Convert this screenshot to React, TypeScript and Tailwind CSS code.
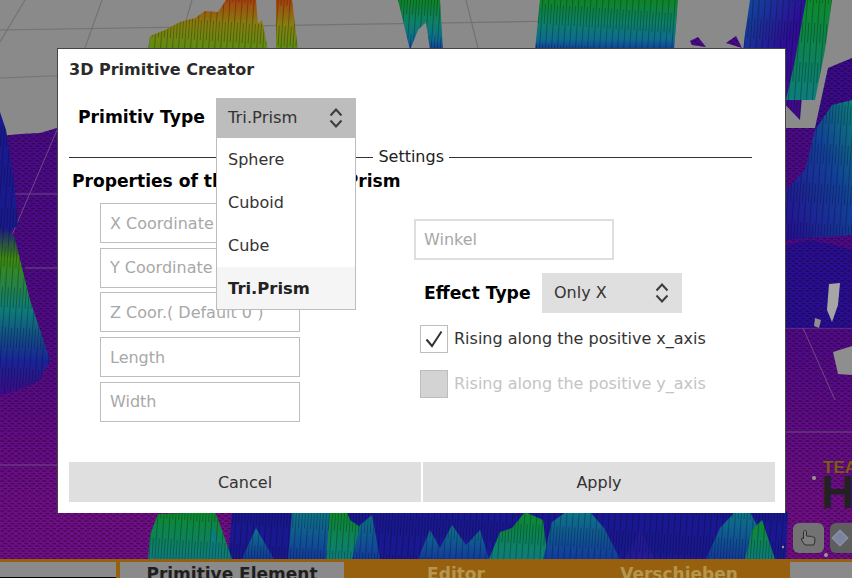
import React from "react";

const font = "font-['DejaVu_Sans',sans-serif]";

function Chevrons() {
  return (
    <svg width="14" height="24" viewBox="0 0 14 24" fill="none" stroke="#3c3c3c" strokeWidth="2">
      <path d="M1.5 9.5 7 3.5l5.5 6" />
      <path d="M1.5 14.5 7 20.5l5.5-6" />
    </svg>
  );
}

// one surface of the height map: gradient fill plus the mesh texture on top
function Surface({ points, fill, streak }: { points: string; fill: string; streak?: boolean }) {
  return (
    <>
      <polygon points={points} fill={fill} />
      <polygon points={points} fill={streak ? "url(#streak)" : "url(#mesh)"} />
    </>
  );
}

function Terrain() {
  return (
    <svg className="absolute inset-0" width="852" height="578" viewBox="0 0 852 578">
      <defs>
        <pattern id="mesh" width="7" height="5" patternUnits="userSpaceOnUse">
          <path d="M0 1h5M3 3.5h4M2 0v2M6 3v2" stroke="#000" strokeOpacity="0.42" strokeWidth="0.7" fill="none" />
        </pattern>
        <pattern id="streak" width="6" height="40" patternUnits="userSpaceOnUse" patternTransform="rotate(4)">
          <path d="M1.5 0v40M4.5 6v20" stroke="#000" strokeOpacity="0.35" strokeWidth="0.8" fill="none" />
        </pattern>
        <linearGradient id="ground" gradientUnits="userSpaceOnUse" x1="0" y1="130" x2="0" y2="500">
          <stop offset="0" stopColor="#4a0a86" />
          <stop offset="0.6" stopColor="#520a86" />
          <stop offset="1" stopColor="#6e0e84" />
        </linearGradient>
        <linearGradient id="warm" x1="0" y1="0" x2="0" y2="1">
          <stop offset="0" stopColor="#a8420f" />
          <stop offset="0.5" stopColor="#84800f" />
          <stop offset="1" stopColor="#5c8c14" />
        </linearGradient>
        <linearGradient id="cool" x1="0" y1="0" x2="0" y2="1">
          <stop offset="0" stopColor="#0f8427" />
          <stop offset="0.45" stopColor="#0d8068" />
          <stop offset="0.8" stopColor="#0e6a90" />
          <stop offset="1" stopColor="#123c98" />
        </linearGradient>
        <linearGradient id="side" x1="0" y1="0" x2="1" y2="1">
          <stop offset="0" stopColor="#0e4c9a" />
          <stop offset="0.5" stopColor="#2c0e96" />
          <stop offset="1" stopColor="#4a0a85" />
        </linearGradient>
        <linearGradient id="peakRight" x1="1" y1="0" x2="0" y2="1">
          <stop offset="0" stopColor="#0d7c78" />
          <stop offset="0.4" stopColor="#123f98" />
          <stop offset="1" stopColor="#260e92" />
        </linearGradient>
        <linearGradient id="hill" x1="0" y1="0" x2="0" y2="1">
          <stop offset="0" stopColor="#160e8c" />
          <stop offset="0.2" stopColor="#3c8a10" />
          <stop offset="0.5" stopColor="#0d7c78" />
          <stop offset="0.8" stopColor="#182496" />
          <stop offset="1" stopColor="#3c0a88" />
        </linearGradient>
        <linearGradient id="spike" x1="0" y1="0" x2="0" y2="1">
          <stop offset="0" stopColor="#0d7488" />
          <stop offset="1" stopColor="#133a9c" />
        </linearGradient>
        <linearGradient id="spikeGreen" x1="0" y1="0" x2="0" y2="1">
          <stop offset="0" stopColor="#0d8a2c" />
          <stop offset="1" stopColor="#0d7c7c" />
        </linearGradient>
      </defs>

      <rect width="852" height="578" fill="#8a8a8a" />
      <g stroke="#737373" strokeWidth="1.2">
        <path d="M0 30 560 21" />
        <path d="M0 78 150 72" />
        <path d="M25 0 0 42M102 0 85 48M192 0 178 48M466 0 478 48" />
      </g>

      {/* purple ground */}
      <Surface points="0,136 20,134 40,133 57,128 852,128 852,578 0,578" fill="url(#ground)" />
      <g stroke="#6d4a86" strokeWidth="1">
        <path d="M57 130 12 235M15 194H57M25 268H57M0 465H57" />
        <path d="M786 328H852M786 432H852M795 310l40 90" />
      </g>

      {/* peaks above the dialog */}
      <Surface streak points="148,50 150,36 165,30 180,22 195,18 205,11 218,12 226,0 256,0 258,24 262,20 268,50" fill="url(#warm)" />
      <Surface streak points="276,0 292,0 298,50 276,50" fill="url(#warm)" />
      <Surface streak points="398,0 440,0 443,50 430,50 426,22 418,30 410,50 404,25" fill="url(#cool)" />
      <Surface streak points="540,0 678,0 674,50 535,50" fill="url(#cool)" />
      <Surface streak points="750,0 810,0 800,120 742,60 745,34" fill="url(#side)" />
      <Surface streak points="806,0 832,0 825,50 815,100 786,100 795,60" fill="url(#spikeGreen)" />
      <Surface points="690,41 698,37 706,47 692,45" fill="#480a86" />
      <Surface points="726,43 736,36 742,48" fill="#480a86" />
      <Surface points="828,68 852,58 852,128 815,128" fill="#3a0a88" />

      {/* left hill */}
      <Surface streak points="0,112 6,130 14,180 18,225 0,240" fill="#1a1a90" />
      <Surface streak points="0,225 14,235 30,300 50,360 40,380 20,390 0,395" fill="url(#hill)" />

      {/* right side */}
      <Surface streak points="786,190 805,170 815,130 832,105 852,100 852,235 786,240" fill="url(#peakRight)" />
      <Surface points="786,245 810,240 830,244 852,250 852,328 786,328" fill="#2a0e92" />
      <polygon points="829,284 840,283 838,305 832,322 827,310" fill="#a6a6a6" />
      <polygon points="833,352 852,346 852,375 838,374" fill="#8e8e8e" />
      <polygon points="815,318 821,320 819,328 814,326" fill="#8e8e8e" />

      {/* strip under the dialog */}
      <Surface streak points="228,559 232,512 788,512 786,559" fill="#1a1890" />
      <Surface streak points="148,559 150,535 158,514 215,512 222,530 232,559" fill="url(#spikeGreen)" />
      <Surface streak points="208,559 212,525 225,559" fill="#0d7c7c" />
      <Surface streak points="242,559 256,528 274,559" fill="url(#spike)" />
      <Surface streak points="288,559 292,512 345,512 350,559" fill="url(#spike)" />
      <Surface streak points="326,559 330,512 347,512 350,520 372,535 378,559" fill="url(#spikeGreen)" />
      <Surface streak points="352,559 360,525 372,515 380,559" fill="url(#spike)" />
      <Surface streak points="418,559 430,530 440,548 452,525 466,545 480,530 489,559" fill="url(#spike)" />
      <Surface streak points="489,559 500,532 512,528 525,512 543,520 548,559" fill="url(#spikeGreen)" />
      <Surface streak points="543,559 552,522 566,512 590,512 604,528 620,559" fill="url(#spike)" />
      <Surface streak points="625,559 640,530 655,559" fill="#221a98" />
      <Surface streak points="706,559 720,528 735,512 750,512 762,535 772,559" fill="url(#spike)" />
      <Surface streak points="745,559 752,530 762,520 775,559" fill="url(#spikeGreen)" />

      <g fill="#989898">
        <circle cx="814" cy="478" r="2" />
        <circle cx="826" cy="555" r="2" />
        <circle cx="783" cy="547" r="1.2" />
      </g>
    </svg>
  );
}

function Field({ placeholder, className = "" }: { placeholder: string; className?: string }) {
  return (
    <input
      placeholder={placeholder}
      className={`w-[200px] h-10 border bg-white text-base text-[#333] placeholder:text-[#a8a8a8] outline-none ${className}`}
    />
  );
}

function Select({ value, className = "" }: { value: string; className?: string }) {
  return (
    <div className={`w-[140px] h-10 flex items-center justify-between pl-3 pr-[13px] text-[#333] ${className}`}>
      <span>{value}</span>
      <Chevrons />
    </div>
  );
}

function Checkbox({ checked, label }: { checked?: boolean; label: string }) {
  return (
    <div className="flex items-center gap-[6px]">
      <div
        className={`w-7 h-7 flex items-center justify-center border ${
          checked ? "border-[#bdbdbd] bg-white" : "border-[#bdbdbd] bg-[#d3d3d3]"
        }`}
      >
        {checked && (
          <svg width="20" height="20" viewBox="0 0 20 20" fill="none" stroke="#333" strokeWidth="2">
            <path d="M2.5 10.5 8 17 17.5 2.5" />
          </svg>
        )}
      </div>
      <span className={`text-base ${checked ? "text-[#333]" : "text-[#c4c4c4]"}`}>{label}</span>
    </div>
  );
}

export default function App() {
  const items = ["Sphere", "Cuboid", "Cube"];
  const fieldClass = "border-[#bdbdbd] px-[9px]";

  return (
    <div className={`relative w-[852px] h-[578px] overflow-hidden flex flex-col justify-end ${font}`}>
      <Terrain />

      {/* logo and tool buttons behind the dialog */}
      <div className="absolute left-[823px] top-[459px] text-[17px] leading-[17px] font-bold text-[#7a5c12] font-['Liberation_Sans',sans-serif]">
        TEAM
      </div>
      <div className="absolute left-[821px] top-[476px] text-[46px] leading-8 font-bold text-[#222] font-['Liberation_Sans',sans-serif]">
        H
      </div>
      <div className="absolute left-[793px] top-[523px] w-[31px] h-[30px] rounded-md bg-[#727272] flex items-center justify-center">
        <svg width="18" height="18" viewBox="0 0 18 18" fill="#7e7e7e" stroke="#2e2e2e" strokeWidth="1">
          <path d="M5 1.5c1 0 1.5.6 1.5 1.5v4l1 .2 1.5-.2 1 .5 1.5-.2 1 .6 1.3.1 1 1.2V13l-1 3H5l-3-4-.5-2.5L3 9l.5.5V3c0-1 .5-1.5 1.5-1.5z" />
        </svg>
      </div>
      <div className="absolute left-[830px] top-[523px] w-[31px] h-[30px] rounded-md bg-[#5e5e5e] flex items-center pl-[4px]">
        <div className="w-[12px] h-[12px] rotate-45 bg-[#7d84a0] border border-[#8d93aa]" />
      </div>

      {/* bottom tab bar */}
      <div className="relative h-[19px] bg-[#96600f] pt-[3px] flex text-[17px] font-bold leading-6">
        <div className="w-[116px] h-4 bg-[#8a8a8a] border-b border-black" />
        <div className="ml-1 w-[224px] h-4 bg-[#8a8a8a] text-[#1f1f1f] text-center overflow-hidden">
          Primitive Element
        </div>
        <div className="w-[224px] h-4 text-[#b5964e] text-center overflow-hidden">Editor</div>
        <div className="w-[222px] h-4 text-[#b5964e] text-center overflow-hidden">Verschieben</div>
        <div className="flex-1 h-4 bg-[#8a8a8a]" />
      </div>

      {/* dialog */}
      <div className="absolute left-[57px] top-[48px] w-[729px] h-[465px] bg-white border-t border-l border-r border-[#444] pl-[11px] flex flex-col">
        <h2 className="mt-[11px] h-5 text-base leading-5 font-bold text-[#2a2a2a]">3D Primitive Creator</h2>

        <div className="relative mt-[18px] flex items-center">
          <span className="ml-[9px] w-[138px] text-[17.2px] font-bold text-black">Primitiv Type</span>
          <Select value="Tri.Prism" className="bg-[#bdbdbd] text-[16.4px]" />
          <div className="absolute left-[147px] top-10 w-[140px] bg-white border border-t-0 border-[#bdbdbd] z-10">
            {items.map((item) => (
              <div key={item} className="h-[43px] flex items-center pl-[11px] text-base text-[#333]">
                {item}
              </div>
            ))}
            <div className="h-[42px] flex items-center pl-[11px] pt-[2px] text-[16.4px] font-bold text-[#222] bg-[#f5f5f5]">
              Tri.Prism
            </div>
          </div>
        </div>

        <div className="mt-[9px] w-[683px] flex items-center">
          <div className="flex-1 border-t border-[#333]" />
          <span className="px-[5px] text-base leading-5 text-[#222]">Settings</span>
          <div className="w-[303px] border-t border-[#333]" />
        </div>

        <div className="mt-[3px] ml-[3px] h-[22px] text-[17.1px] leading-[22px] font-bold text-black">
          Properties of the Triangular Prism
        </div>

        <div className="flex mt-[11px] h-[219px]">
          <div className="ml-[31px] w-[314px] flex flex-col gap-[4.7px]">
            <Field placeholder="X Coordinate" className={fieldClass} />
            <Field placeholder="Y Coordinate" className={fieldClass} />
            <Field placeholder="Z Coor.( Default 0 )" className={fieldClass} />
            <Field placeholder="Length" className={fieldClass} />
            <Field placeholder="Width" className={fieldClass} />
          </div>
          <div className="flex flex-col">
            <Field placeholder="Winkel" className="mt-4 h-[41px] border-2 border-[#dedede] px-2" />
            <div className="mt-[13px] ml-[10px] flex items-center">
              <span className="w-[118px] pt-px text-[17.2px] font-bold text-black">Effect Type</span>
              <Select value="Only X" className="bg-[#dfdfdf] text-base" />
            </div>
            <div className="ml-[6px] mt-3 flex flex-col gap-[17px]">
              <Checkbox checked label="Rising along the positive x_axis" />
              <Checkbox label="Rising along the positive y_axis" />
            </div>
          </div>
        </div>

        <div className="mt-10 flex gap-[2px] text-base text-[#333]">
          <button className="w-[352px] h-10 pt-px bg-[#dfdfdf]">Cancel</button>
          <button className="w-[352px] h-10 pt-px bg-[#dfdfdf]">Apply</button>
        </div>
      </div>
    </div>
  );
}
